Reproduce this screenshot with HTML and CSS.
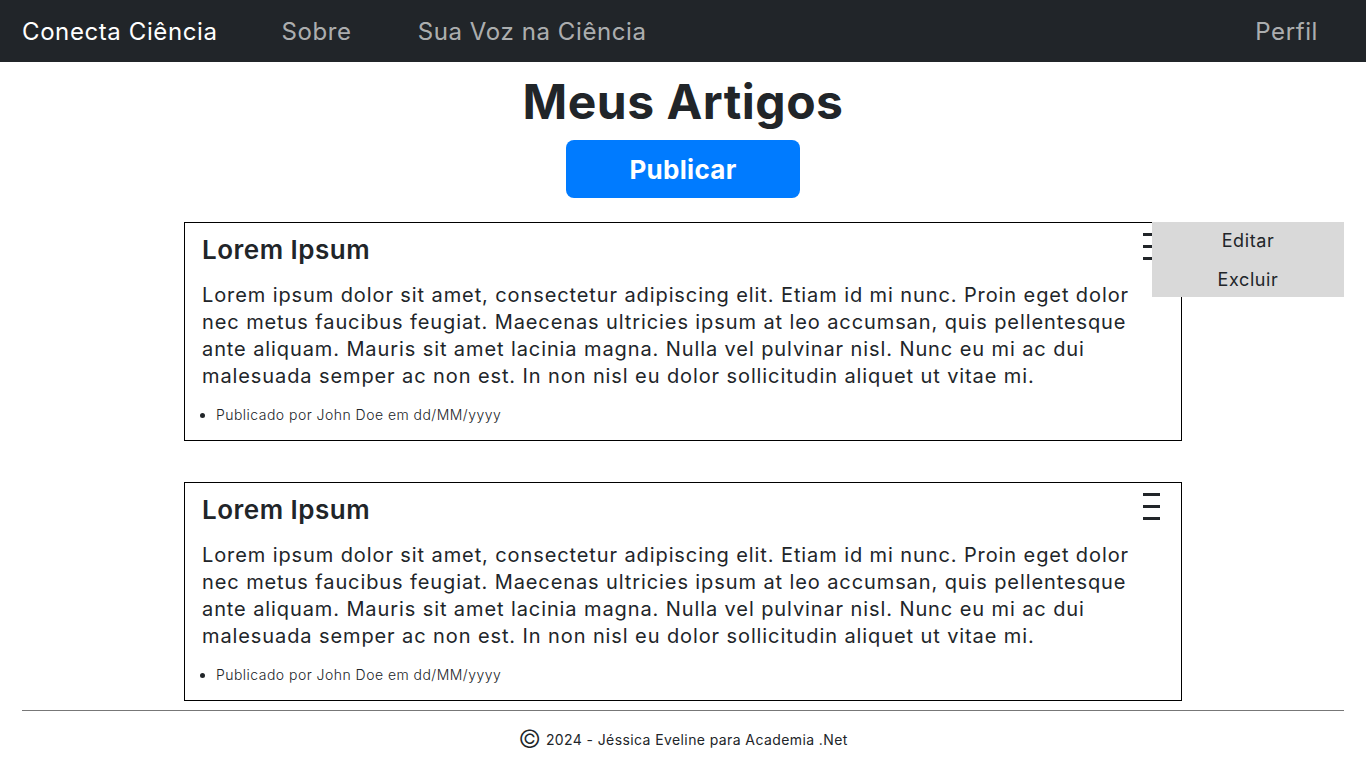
FILE: index.html
```html
<!DOCTYPE html>
<html lang="pt-BR">
<head>
<meta charset="utf-8">
<title>Meus Artigos</title>
<link rel="stylesheet" href="styles.css">
</head>
<body>
<nav class="navbar">
  <a class="brand" href="#">Conecta Ciência</a>
  <a class="nav-link" href="#">Sobre</a>
  <a class="nav-link" href="#">Sua Voz na Ciência</a>
  <a class="nav-link profile" href="#">Perfil</a>
</nav>
<main class="main">
  <h1 class="title">Meus Artigos</h1>
  <button class="btn-publish">Publicar</button>
  <article class="card">
    <div class="card-head">
      <h2 class="card-title">Lorem Ipsum</h2>
      <span class="menu-icon"><i></i><i></i><i></i></span>
    </div>
    <p class="card-text">Lorem ipsum dolor sit amet, consectetur adipiscing elit. Etiam id mi nunc. Proin eget dolor nec metus faucibus feugiat. Maecenas ultricies ipsum at leo accumsan, quis pellentesque ante aliquam. Mauris sit amet lacinia magna. Nulla vel pulvinar nisl. Nunc eu mi ac dui malesuada semper ac non est. In non nisl eu dolor sollicitudin aliquet ut vitae mi.</p>
    <ul class="meta"><li>Publicado por John Doe em dd/MM/yyyy</li></ul>
    <div class="dropdown">
      <a href="#">Editar</a>
      <a href="#">Excluir</a>
    </div>
  </article>
  <article class="card">
    <div class="card-head">
      <h2 class="card-title">Lorem Ipsum</h2>
      <span class="menu-icon"><i></i><i></i><i></i></span>
    </div>
    <p class="card-text">Lorem ipsum dolor sit amet, consectetur adipiscing elit. Etiam id mi nunc. Proin eget dolor nec metus faucibus feugiat. Maecenas ultricies ipsum at leo accumsan, quis pellentesque ante aliquam. Mauris sit amet lacinia magna. Nulla vel pulvinar nisl. Nunc eu mi ac dui malesuada semper ac non est. In non nisl eu dolor sollicitudin aliquet ut vitae mi.</p>
    <ul class="meta"><li>Publicado por John Doe em dd/MM/yyyy</li></ul>
  </article>
</main>
<footer class="footer">
  <p class="footer-text"><span class="copy">©</span> 2024 - Jéssica Eveline para Academia .Net</p>
</footer>
</body>
</html>
```

FILE: styles.css
```css
* { box-sizing: border-box; }
body {
  margin: 0;
  font-family: Inter, "Noto Sans", sans-serif;
  color: #212529;
  background: #fff;
}
a { text-decoration: none; }
.navbar {
  height: 62px;
  background: #212529;
  display: flex;
  align-items: center;
  padding: 0 48px 0 22px;
}
.brand {
  color: #fff;
  font-size: 24px;
  letter-spacing: 0.6px;
  margin-right: 64px;
}
.nav-link {
  color: rgba(255,255,255,0.65);
  font-size: 24px;
  letter-spacing: 0.6px;
  margin-right: 66px;
}
.nav-link.profile { margin-left: auto; margin-right: 0; }
.main {
  display: flex;
  flex-direction: column;
  align-items: center;
}
.title {
  margin: 12px 0 10px;
  font-size: 48px;
  font-weight: 700;
  line-height: 56px;
  letter-spacing: 0.5px;
}
.btn-publish {
  width: 234px;
  height: 58px;
  border: none;
  border-radius: 8px;
  background: #007bff;
  color: #fff;
  font-family: inherit;
  font-size: 26px;
  font-weight: 700;
  letter-spacing: 0.3px;
  padding-top: 2px;
  margin-bottom: 24px;
}
.card {
  position: relative;
  width: 998px;
  border: 1px solid #000;
  padding: 10px 17px 15px;
  margin-bottom: 41px;
}
.card:last-of-type { margin-bottom: 9px; }
.card-head {
  display: flex;
  justify-content: space-between;
  align-items: flex-start;
}
.card-title {
  margin: 0;
  font-size: 26px;
  font-weight: 600;
  line-height: 34px;
  letter-spacing: 0.5px;
}
.menu-icon {
  display: flex;
  flex-direction: column;
  gap: 9px;
  margin-top: 0;
  margin-right: 4px;
}
.menu-icon i {
  display: block;
  width: 17px;
  height: 3px;
  background: #212529;
}
.card-text {
  margin: 15px 0 15px;
  font-size: 20px;
  line-height: 27px;
  letter-spacing: 0.9px;
}
.meta {
  margin: 0;
  padding-left: 14px;
  font-size: 14px;
  font-weight: 300;
  line-height: 20px;
  letter-spacing: 0.47px;
}
.dropdown {
  position: absolute;
  top: -1px;
  left: 967px;
  width: 192px;
  background: #d9d9d9;
  display: flex;
  flex-direction: column;
}
.dropdown a {
  color: #212529;
  font-size: 18px;
  letter-spacing: 0.6px;
  text-align: center;
  line-height: 26px;
  padding: 6px 0 7px;
}
.dropdown a:last-child { padding-bottom: 4px; }
.footer {
  margin: 0 22px;
  border-top: 1px solid #777;
  padding-top: 19px;
}
.footer-text {
  margin: 0;
  text-align: center;
  font-size: 14px;
  line-height: 20px;
  letter-spacing: 0.4px;
}
.copy {
  font-size: 25px;
  line-height: 0;
  font-weight: 300;
  vertical-align: -3px;
}
```
